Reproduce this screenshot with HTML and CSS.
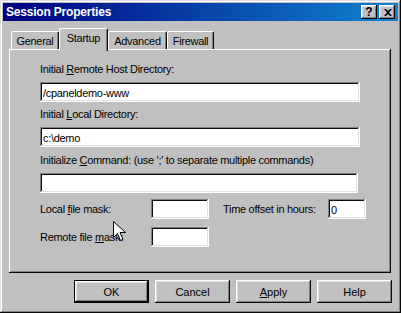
FILE: index.html
```html
<!DOCTYPE html>
<html>
<head>
<title>Session Properties</title>
<link rel="stylesheet" href="styles.css">
</head>
<body>

<div class="window">
  <div class="title-bar">
    <span class="title">Session Properties</span>
    <div class="title-buttons">
      <button class="title-button">?</button>
      <button class="title-button close">
        <svg width="8" height="7" viewBox="0 0 8 7">
          <path d="M0 0 H2 L4 2 L6 0 H8 L5 3.5 L8 7 H6 L4 5 L2 7 H0 L3 3.5 Z" fill="#000"/>
        </svg>
      </button>
    </div>
  </div>

  <div class="tabs">
    <div class="tab tab-general">General</div>
    <div class="tab tab-startup selected">Startup</div>
    <div class="tab tab-advanced">Advanced</div>
    <div class="tab tab-firewall">Firewall</div>
  </div>

  <div class="sheet">
    <div class="label">Initial <u>R</u>emote Host Directory:</div>
    <input class="field wide" type="text" value="/cpaneldemo-www">

    <div class="label">Initial <u>L</u>ocal Directory:</div>
    <input class="field wide second" type="text" value="c:\demo">

    <div class="label">Initialize <u>C</u>ommand: (use ';' to separate multiple commands)</div>
    <input class="field cmd" type="text" value="">

    <div class="row">
      <span class="row-label">Local <u>f</u>ile mask:</span>
      <input class="field mask" type="text" value="">
      <span class="offset-label">Time offset in hours:</span>
      <input class="field offset" type="text" value="0">
    </div>
    <div class="row">
      <span class="row-label">Remote file <u>m</u>ask:</span>
      <input class="field mask" type="text" value="">
    </div>
  </div>

  <div class="buttons">
    <button class="button default">OK</button>
    <button class="button">Cancel</button>
    <button class="button"><u>A</u>pply</button>
    <button class="button">Help</button>
  </div>

  <!-- mouse pointer left over the dialog -->
  <svg class="cursor" width="13" height="21" viewBox="0 0 13 21">
    <path d="M0.5 0.5 L0.5 16.5 L4.5 12.5 L7.5 19.5 L10 18.5 L7 11.5 L12.5 11.5 Z" fill="#fff" stroke="#000" stroke-width="1"/>
  </svg>
</div>

</body>
</html>
```

FILE: styles.css
```css
body, html {
  margin: 0;
  padding: 0;
  background: #c0c0c0;
}

.window {
  position: relative;
  width: 401px;
  height: 313px;
  box-sizing: border-box;
  padding: 3px;
  background: #c0c0c0;
  box-shadow: inset -1px -1px #0a0a0a, inset 1px 1px #dfdfdf,
              inset -2px -2px #808080, inset 2px 2px #fff;
  font-family: "Liberation Sans", Arial, sans-serif;
  font-size: 11px;
  letter-spacing: -0.3px;
  color: #000;
}

.title-bar {
  height: 18px;
  display: flex;
  align-items: center;
  justify-content: space-between;
  padding: 0 3px 0 3px;
  background: linear-gradient(to right, #000080, #1084d0);
}

.title {
  color: #fff;
  font-weight: bold;
  font-size: 12px;
  letter-spacing: -0.2px;
}

.title-buttons {
  display: flex;
  gap: 2px;
}

.title-button {
  display: flex;
  align-items: center;
  justify-content: center;
  width: 16px;
  height: 14px;
  padding: 0;
  border: none;
  background: #c0c0c0;
  box-shadow: inset -1px -1px #0a0a0a, inset 1px 1px #fff,
              inset -2px -2px #808080, inset 2px 2px #dfdfdf;
  font-family: "Liberation Sans", Arial, sans-serif;
  font-size: 12px;
  font-weight: bold;
  color: #000;
}

.title-button.close svg {
  margin-left: 1px;
}

.tabs {
  display: flex;
  align-items: flex-end;
  height: 21px;
  margin-top: 7px;
  padding-left: 8px;
  position: relative;
  z-index: 1;
}

.tab {
  height: 18px;
  box-sizing: border-box;
  text-align: center;
  line-height: 18px;
  border-top: 1px solid #fff;
  border-left: 1px solid #fff;
  border-right: 1px solid #0a0a0a;
  border-radius: 2px 2px 0 0;
  box-shadow: inset -1px 0 #808080;
  background: #c0c0c0;
}

.tab.selected {
  height: 23px;
  margin-bottom: -2px;
  line-height: 19px;
}

.tab-general { width: 48px; }
.tab-startup { width: 49px; }
.tab-advanced { width: 59px; }
.tab-firewall { width: 47px; }

.sheet {
  margin: 0 7px 0 6px;
  height: 224px;
  box-sizing: border-box;
  padding: 14px 31px 0 31px;
  box-shadow: inset -1px -1px #0a0a0a, inset 1px 1px #fff,
              inset -2px -2px #808080;
}

.label {
  height: 13px;
  line-height: 13px;
  margin-bottom: 6px;
  white-space: nowrap;
}

.field {
  display: block;
  flex: none;
  height: 20px;
  box-sizing: border-box;
  border: none;
  margin: 0;
  padding: 2px 3px 0;
  background: #fff;
  box-shadow: inset -1px -1px #fff, inset 1px 1px #808080,
              inset -2px -2px #dfdfdf, inset 2px 2px #0a0a0a;
  font-family: "Liberation Sans", Arial, sans-serif;
  font-size: 11px;
  letter-spacing: -0.3px;
  color: #000;
  outline: none;
}

.field.wide {
  width: 320px;
  margin-bottom: 6px;
}

.field.wide.second {
  margin-bottom: 7px;
}

.field.cmd {
  width: 318px;
  margin-top: 4px;
  margin-bottom: 6px;
}

.row {
  display: flex;
  align-items: center;
  height: 20px;
  margin-bottom: 8px;
}

.row-label {
  flex: none;
  width: 111px;
}

.field.mask {
  width: 58px;
}

.offset-label {
  flex: none;
  margin-left: 14px;
  width: 105px;
}

.field.offset {
  width: 38px;
}

.buttons {
  display: flex;
  justify-content: flex-end;
  gap: 6px;
  margin-top: 7px;
  padding-right: 6px;
}

.button {
  width: 75px;
  height: 23px;
  padding: 0;
  border: none;
  background: #c0c0c0;
  box-shadow: inset -1px -1px #0a0a0a, inset 1px 1px #fff,
              inset -2px -2px #808080, inset 2px 2px #dfdfdf;
  font-family: "Liberation Sans", Arial, sans-serif;
  font-size: 11px;
  color: #000;
}

.button.default {
  border: 1px solid #000;
}

.cursor {
  position: absolute;
  left: 113px;
  top: 221px;
}
```
